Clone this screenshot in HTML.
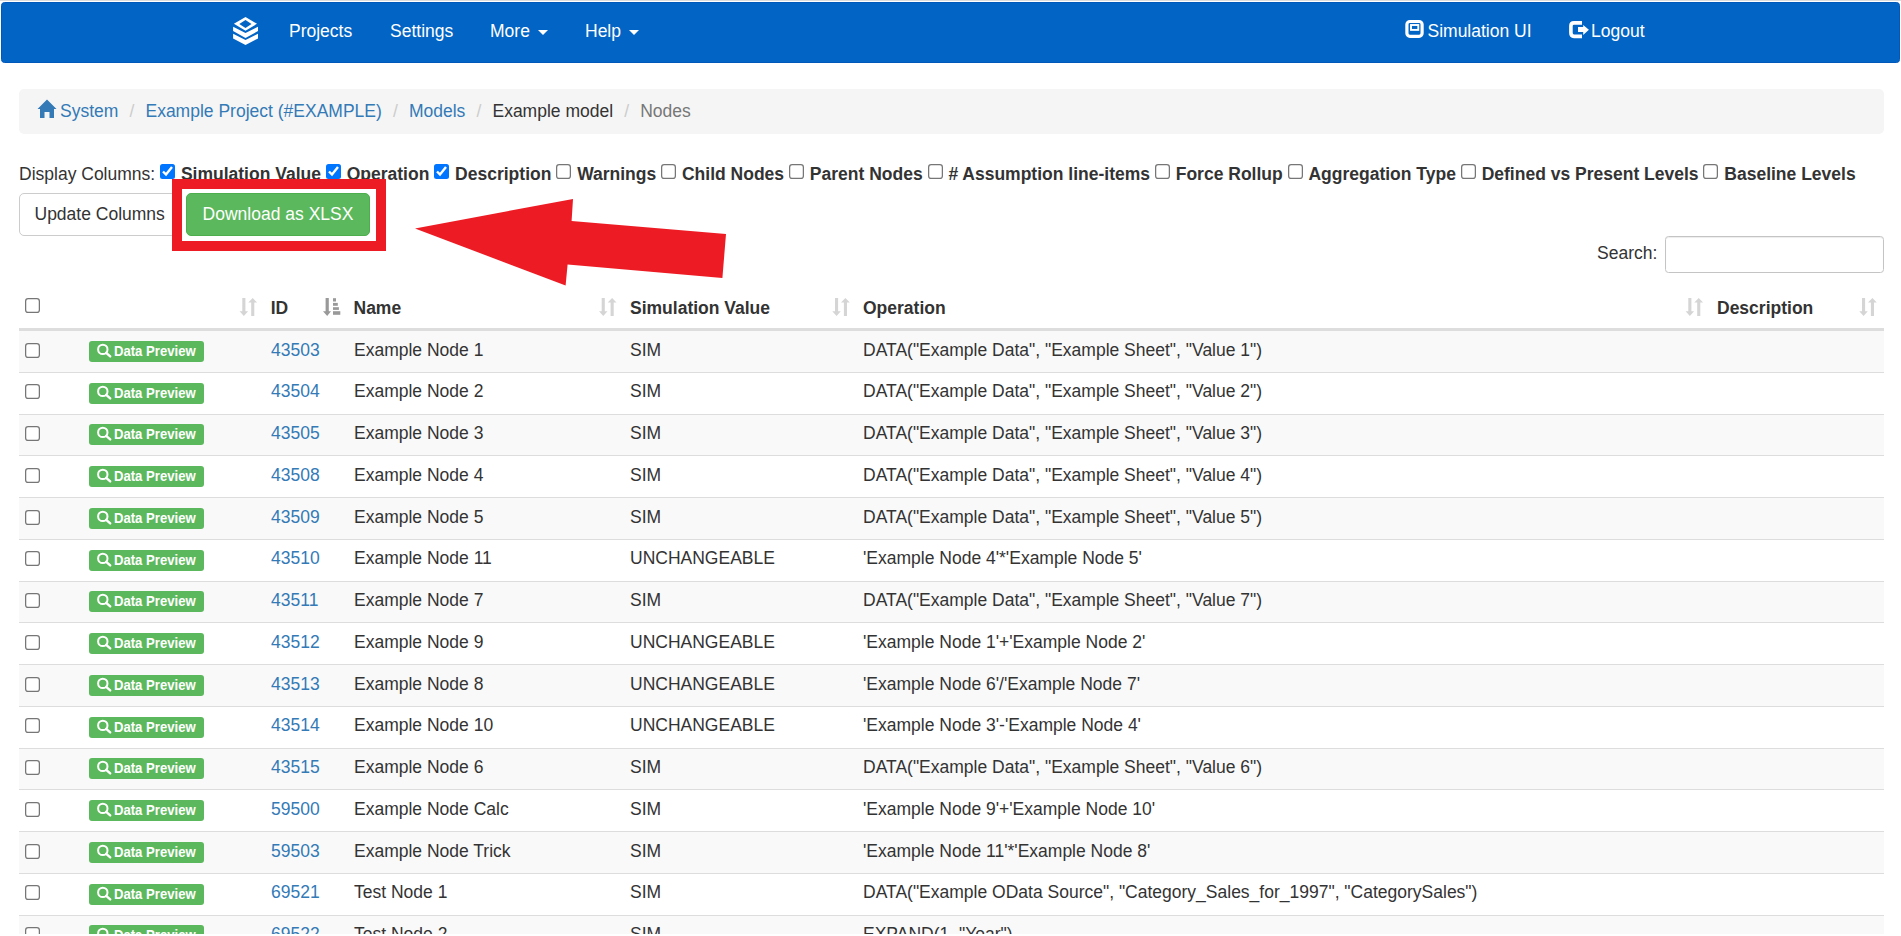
<!DOCTYPE html><html><head><meta charset="utf-8"><title>Nodes</title><style>
*{box-sizing:border-box}
html,body{margin:0;padding:0;background:#fff;overflow:hidden}
body{width:1901px;height:936px;position:relative;font-family:"Liberation Sans",sans-serif;font-size:17.5px;line-height:25px;color:#333}
.abs{position:absolute;white-space:nowrap}
#topline{position:absolute;left:0;top:0;width:1901px;height:1px;background:#dcdcdc}
#nav{position:absolute;left:1px;top:2px;width:1899px;height:61px;background:#0264c4;border:1px solid #0058bb;border-radius:3.5px}
.nl{position:absolute;color:#fff;font-size:17.5px;line-height:25px;white-space:nowrap}
.caret{display:inline-block;width:0;height:0;margin-left:8px;vertical-align:middle;border-top:5px solid #fff;border-left:5px solid transparent;border-right:5px solid transparent}
#bc{position:absolute;left:19px;top:89px;width:1865px;height:45px;background:#f5f5f5;border-radius:5px}
a{color:#337ab7;text-decoration:none}
.sep{color:#ccc;padding:0 6.25px}
input[type=checkbox]{zoom:1.25;margin:0;vertical-align:baseline;width:12px;height:12px}
.cbw input{display:block}
.dcl input{margin-right:0.8px;position:relative;top:-0.8px}
.btn{position:absolute;height:43px;border-radius:5px;font-size:17.5px;line-height:25px;text-align:center;padding:8px 0}
#upd{left:19px;top:193px;width:161px;text-align:left;padding-left:14.5px;background:#fff;border:1px solid #ccc;color:#333}
#dl{left:186px;top:193px;width:184px;background:#5cb85c;border:1px solid #4cae4c;color:#fff}
#search{position:absolute;left:1665px;top:236px;width:219px;height:37px;border:1px solid #c4c4c4;border-radius:3.5px;background:#fff;box-shadow:inset 0 1px 1px rgba(0,0,0,.075)}
th,td{padding:0}
.hdr{position:absolute;font-weight:bold;white-space:nowrap}
.row{position:absolute;left:19px;width:1865px;border-bottom:1px solid #ddd}
.row.odd{background:#f9f9f9}
.lbl{position:absolute;left:89px;width:115px;height:21px;background:#5cb85c;color:#fff;border-radius:3px;font-weight:bold;font-size:13.1px;line-height:21px;white-space:nowrap}
.cell{position:absolute;white-space:nowrap}
</style></head><body>
<div id="topline"></div>
<div id="nav"></div>
<svg class="abs" style="left:228px;top:12px" width="36" height="38" viewBox="228 12 36 38">
<path d="M245.5 16.9 L257 23.8 L245.5 30.7 L233.9 23.8 Z M245.5 20.1 L251.5 24 L245.5 27.9 L239.3 24 Z" fill="#fff" fill-rule="evenodd"/>
<path d="M233.1 26.8 L245.5 33.1 L258 26.8 L258 31.1 L245.5 38 L233.1 31.1 Z" fill="#fff"/>
<path d="M233.1 33.7 L245.5 40 L258 33.7 L258 38.4 L245.5 44.9 L233.1 38.4 Z" fill="#fff"/>
</svg>
<div class="nl" style="left:289px;top:19px">Projects</div>
<div class="nl" style="left:390px;top:19px">Settings</div>
<div class="nl" style="left:490px;top:19px">More<span class="caret"></span></div>
<div class="nl" style="left:585px;top:19px">Help<span class="caret"></span></div>
<svg class="abs" style="left:1400px;top:14px" width="30" height="30" viewBox="1400 14 30 30"><rect x="1406.9" y="21.5" width="15.2" height="14.8" rx="3" fill="none" stroke="#fff" stroke-width="3.2"/><rect x="1411" y="25" width="7.3" height="4.9" fill="none" stroke="#fff" stroke-width="1.9"/></svg>
<div class="nl" style="left:1427.5px;top:19px">Simulation UI</div>
<svg class="abs" style="left:1560px;top:14px" width="32" height="30" viewBox="1560 14 32 30"><path d="M1582 22.9 H1574 Q1570.9 22.9 1570.9 26 V32.8 Q1570.9 36.4 1574 36.4 H1582" fill="none" stroke="#fff" stroke-width="3.6"/><path d="M1578 27 H1583.2 V24.9 L1588.9 29.8 L1583.2 35 V31.9 H1578 Z" fill="#fff"/></svg>
<div class="nl" style="left:1591px;top:19px">Logout</div>
<div id="bc"></div>
<svg class="abs" style="left:37px;top:99px" width="20" height="19" viewBox="0 0 20 19"><path d="M10 0.5 L19.5 10 H17 V19 H12.5 V13 H7.5 V19 H3 V10 H0.5 Z" fill="#337ab7"/></svg>
<div class="abs" style="left:60px;top:99px"><a>System</a> <span class="sep">/&nbsp;</span><a>Example Project (#EXAMPLE)</a> <span class="sep">/&nbsp;</span><a>Models</a> <span class="sep">/&nbsp;</span>Example model <span class="sep">/&nbsp;</span><span style="color:#777">Nodes</span></div>
<div class="abs dcl" style="left:19px;top:162px">Display Columns: <input type="checkbox" checked> <b>Simulation Value</b> <input type="checkbox" checked> <b>Operation</b> <input type="checkbox" checked> <b>Description</b> <input type="checkbox"> <b>Warnings</b> <input type="checkbox"> <b>Child Nodes</b> <input type="checkbox"> <b>Parent Nodes</b> <input type="checkbox"> <b># Assumption line-items</b> <input type="checkbox"> <b>Force Rollup</b> <input type="checkbox"> <b>Aggregation Type</b> <input type="checkbox"> <b>Defined vs Present Levels</b> <input type="checkbox"> <b>Baseline Levels</b></div>
<div class="btn" id="upd">Update Columns</div>
<div class="btn" id="dl">Download as XLSX</div>
<div class="abs" style="left:1597px;top:241px">Search:</div>
<div id="search"></div>
<div class="abs" style="left:19px;top:328px;width:1865px;height:3px;background:#ddd"></div>
<div class="abs cbw" style="left:25px;top:298px"><input type="checkbox"></div>
<svg class="abs" style="left:237px;top:292px" width="24" height="30" viewBox="237 292 24 30"><path d="M242.29999999999998 298.1 H245.4 V311.2 H248.1 L243.85 315.9 L239.6 311.2 H242.29999999999998 Z" fill="#d5d5d5"/><path d="M251.2 315.9 H254.29999999999998 V302.6 H257.1 L252.7 298.1 L248.29999999999998 302.6 H251.2 Z" fill="#d5d5d5"/></svg>
<svg class="abs" style="left:597px;top:292px" width="24" height="30" viewBox="597 292 24 30"><path d="M601.7 298.1 H604.8 V311.2 H607.5 L603.25 315.9 L599 311.2 H601.7 Z" fill="#d5d5d5"/><path d="M610.6 315.9 H613.7 V302.6 H616.5 L612.1 298.1 L607.7 302.6 H610.6 Z" fill="#d5d5d5"/></svg>
<svg class="abs" style="left:830px;top:292px" width="24" height="30" viewBox="830 292 24 30"><path d="M835.0 298.1 H838.0999999999999 V311.2 H840.8 L836.55 315.9 L832.3 311.2 H835.0 Z" fill="#d5d5d5"/><path d="M843.9 315.9 H847.0 V302.6 H849.8 L845.4 298.1 L841.0 302.6 H843.9 Z" fill="#d5d5d5"/></svg>
<svg class="abs" style="left:1683px;top:292px" width="24" height="30" viewBox="1683 292 24 30"><path d="M1688.3 298.1 H1691.3999999999999 V311.2 H1694.1 L1689.85 315.9 L1685.6 311.2 H1688.3 Z" fill="#d5d5d5"/><path d="M1697.1999999999998 315.9 H1700.3 V302.6 H1703.1 L1698.6999999999998 298.1 L1694.3 302.6 H1697.1999999999998 Z" fill="#d5d5d5"/></svg>
<svg class="abs" style="left:1857px;top:292px" width="24" height="30" viewBox="1857 292 24 30"><path d="M1862.0 298.1 H1865.1 V311.2 H1867.8 L1863.55 315.9 L1859.3 311.2 H1862.0 Z" fill="#d5d5d5"/><path d="M1870.8999999999999 315.9 H1874.0 V302.6 H1876.8 L1872.3999999999999 298.1 L1868.0 302.6 H1870.8999999999999 Z" fill="#d5d5d5"/></svg>
<svg class="abs" style="left:315px;top:292px" width="34" height="30" viewBox="315 292 34 30"><path d="M325.6 298.1 H328.8 V311.2 H331 L327.2 315.9 L323 311.2 H325.6 Z" fill="#999"/><rect x="333" y="298.2" width="3" height="3.3" fill="#999"/><rect x="333" y="302.9" width="4.8" height="2.9" fill="#999"/><rect x="333" y="307.2" width="5.9" height="2.7" fill="#999"/><rect x="333" y="311.2" width="7.3" height="3.6" fill="#999"/></svg>
<div class="hdr" style="left:270.7px;top:296px">ID</div>
<div class="hdr" style="left:353.5px;top:296px">Name</div>
<div class="hdr" style="left:630.0px;top:296px">Simulation Value</div>
<div class="hdr" style="left:863.0px;top:296px">Operation</div>
<div class="hdr" style="left:1717.0px;top:296px">Description</div>
<div class="row odd" style="top:331.00px;height:41.75px"></div>
<div class="abs cbw" style="left:25px;top:343px"><input type="checkbox"></div>
<div class="lbl" style="top:340.90px"><svg style="position:absolute;left:0;top:0" width="30" height="21" viewBox="0 0 30 21"><circle cx="13.8" cy="8.4" r="4.7" fill="none" stroke="#fff" stroke-width="2"/><path d="M17.2 11.8 L21.2 15.4" stroke="#fff" stroke-width="2.4" stroke-linecap="round"/></svg><span style="position:absolute;left:25px;font-size:13.125px;transform:scaleY(1.07);transform-origin:0 15px">Data Preview</span></div>
<div class="cell" style="left:271px;top:337.60px"><a>43503</a></div>
<div class="cell" style="left:354px;top:337.60px">Example Node 1</div>
<div class="cell" style="left:630px;top:337.60px">SIM</div>
<div class="cell" style="left:863px;top:337.60px">DATA(&quot;Example Data&quot;, &quot;Example Sheet&quot;, &quot;Value 1&quot;)</div>
<div class="row" style="top:372.75px;height:41.75px"></div>
<div class="abs cbw" style="left:25px;top:384px"><input type="checkbox"></div>
<div class="lbl" style="top:382.65px"><svg style="position:absolute;left:0;top:0" width="30" height="21" viewBox="0 0 30 21"><circle cx="13.8" cy="8.4" r="4.7" fill="none" stroke="#fff" stroke-width="2"/><path d="M17.2 11.8 L21.2 15.4" stroke="#fff" stroke-width="2.4" stroke-linecap="round"/></svg><span style="position:absolute;left:25px;font-size:13.125px;transform:scaleY(1.07);transform-origin:0 15px">Data Preview</span></div>
<div class="cell" style="left:271px;top:379.35px"><a>43504</a></div>
<div class="cell" style="left:354px;top:379.35px">Example Node 2</div>
<div class="cell" style="left:630px;top:379.35px">SIM</div>
<div class="cell" style="left:863px;top:379.35px">DATA(&quot;Example Data&quot;, &quot;Example Sheet&quot;, &quot;Value 2&quot;)</div>
<div class="row odd" style="top:414.50px;height:41.75px"></div>
<div class="abs cbw" style="left:25px;top:426px"><input type="checkbox"></div>
<div class="lbl" style="top:424.40px"><svg style="position:absolute;left:0;top:0" width="30" height="21" viewBox="0 0 30 21"><circle cx="13.8" cy="8.4" r="4.7" fill="none" stroke="#fff" stroke-width="2"/><path d="M17.2 11.8 L21.2 15.4" stroke="#fff" stroke-width="2.4" stroke-linecap="round"/></svg><span style="position:absolute;left:25px;font-size:13.125px;transform:scaleY(1.07);transform-origin:0 15px">Data Preview</span></div>
<div class="cell" style="left:271px;top:421.10px"><a>43505</a></div>
<div class="cell" style="left:354px;top:421.10px">Example Node 3</div>
<div class="cell" style="left:630px;top:421.10px">SIM</div>
<div class="cell" style="left:863px;top:421.10px">DATA(&quot;Example Data&quot;, &quot;Example Sheet&quot;, &quot;Value 3&quot;)</div>
<div class="row" style="top:456.25px;height:41.75px"></div>
<div class="abs cbw" style="left:25px;top:468px"><input type="checkbox"></div>
<div class="lbl" style="top:466.15px"><svg style="position:absolute;left:0;top:0" width="30" height="21" viewBox="0 0 30 21"><circle cx="13.8" cy="8.4" r="4.7" fill="none" stroke="#fff" stroke-width="2"/><path d="M17.2 11.8 L21.2 15.4" stroke="#fff" stroke-width="2.4" stroke-linecap="round"/></svg><span style="position:absolute;left:25px;font-size:13.125px;transform:scaleY(1.07);transform-origin:0 15px">Data Preview</span></div>
<div class="cell" style="left:271px;top:462.85px"><a>43508</a></div>
<div class="cell" style="left:354px;top:462.85px">Example Node 4</div>
<div class="cell" style="left:630px;top:462.85px">SIM</div>
<div class="cell" style="left:863px;top:462.85px">DATA(&quot;Example Data&quot;, &quot;Example Sheet&quot;, &quot;Value 4&quot;)</div>
<div class="row odd" style="top:498.00px;height:41.75px"></div>
<div class="abs cbw" style="left:25px;top:510px"><input type="checkbox"></div>
<div class="lbl" style="top:507.90px"><svg style="position:absolute;left:0;top:0" width="30" height="21" viewBox="0 0 30 21"><circle cx="13.8" cy="8.4" r="4.7" fill="none" stroke="#fff" stroke-width="2"/><path d="M17.2 11.8 L21.2 15.4" stroke="#fff" stroke-width="2.4" stroke-linecap="round"/></svg><span style="position:absolute;left:25px;font-size:13.125px;transform:scaleY(1.07);transform-origin:0 15px">Data Preview</span></div>
<div class="cell" style="left:271px;top:504.60px"><a>43509</a></div>
<div class="cell" style="left:354px;top:504.60px">Example Node 5</div>
<div class="cell" style="left:630px;top:504.60px">SIM</div>
<div class="cell" style="left:863px;top:504.60px">DATA(&quot;Example Data&quot;, &quot;Example Sheet&quot;, &quot;Value 5&quot;)</div>
<div class="row" style="top:539.75px;height:41.75px"></div>
<div class="abs cbw" style="left:25px;top:551px"><input type="checkbox"></div>
<div class="lbl" style="top:549.65px"><svg style="position:absolute;left:0;top:0" width="30" height="21" viewBox="0 0 30 21"><circle cx="13.8" cy="8.4" r="4.7" fill="none" stroke="#fff" stroke-width="2"/><path d="M17.2 11.8 L21.2 15.4" stroke="#fff" stroke-width="2.4" stroke-linecap="round"/></svg><span style="position:absolute;left:25px;font-size:13.125px;transform:scaleY(1.07);transform-origin:0 15px">Data Preview</span></div>
<div class="cell" style="left:271px;top:546.35px"><a>43510</a></div>
<div class="cell" style="left:354px;top:546.35px">Example Node 11</div>
<div class="cell" style="left:630px;top:546.35px">UNCHANGEABLE</div>
<div class="cell" style="left:863px;top:546.35px">&#x27;Example Node 4&#x27;*&#x27;Example Node 5&#x27;</div>
<div class="row odd" style="top:581.50px;height:41.75px"></div>
<div class="abs cbw" style="left:25px;top:593px"><input type="checkbox"></div>
<div class="lbl" style="top:591.40px"><svg style="position:absolute;left:0;top:0" width="30" height="21" viewBox="0 0 30 21"><circle cx="13.8" cy="8.4" r="4.7" fill="none" stroke="#fff" stroke-width="2"/><path d="M17.2 11.8 L21.2 15.4" stroke="#fff" stroke-width="2.4" stroke-linecap="round"/></svg><span style="position:absolute;left:25px;font-size:13.125px;transform:scaleY(1.07);transform-origin:0 15px">Data Preview</span></div>
<div class="cell" style="left:271px;top:588.10px"><a>43511</a></div>
<div class="cell" style="left:354px;top:588.10px">Example Node 7</div>
<div class="cell" style="left:630px;top:588.10px">SIM</div>
<div class="cell" style="left:863px;top:588.10px">DATA(&quot;Example Data&quot;, &quot;Example Sheet&quot;, &quot;Value 7&quot;)</div>
<div class="row" style="top:623.25px;height:41.75px"></div>
<div class="abs cbw" style="left:25px;top:635px"><input type="checkbox"></div>
<div class="lbl" style="top:633.15px"><svg style="position:absolute;left:0;top:0" width="30" height="21" viewBox="0 0 30 21"><circle cx="13.8" cy="8.4" r="4.7" fill="none" stroke="#fff" stroke-width="2"/><path d="M17.2 11.8 L21.2 15.4" stroke="#fff" stroke-width="2.4" stroke-linecap="round"/></svg><span style="position:absolute;left:25px;font-size:13.125px;transform:scaleY(1.07);transform-origin:0 15px">Data Preview</span></div>
<div class="cell" style="left:271px;top:629.85px"><a>43512</a></div>
<div class="cell" style="left:354px;top:629.85px">Example Node 9</div>
<div class="cell" style="left:630px;top:629.85px">UNCHANGEABLE</div>
<div class="cell" style="left:863px;top:629.85px">&#x27;Example Node 1&#x27;+&#x27;Example Node 2&#x27;</div>
<div class="row odd" style="top:665.00px;height:41.75px"></div>
<div class="abs cbw" style="left:25px;top:677px"><input type="checkbox"></div>
<div class="lbl" style="top:674.90px"><svg style="position:absolute;left:0;top:0" width="30" height="21" viewBox="0 0 30 21"><circle cx="13.8" cy="8.4" r="4.7" fill="none" stroke="#fff" stroke-width="2"/><path d="M17.2 11.8 L21.2 15.4" stroke="#fff" stroke-width="2.4" stroke-linecap="round"/></svg><span style="position:absolute;left:25px;font-size:13.125px;transform:scaleY(1.07);transform-origin:0 15px">Data Preview</span></div>
<div class="cell" style="left:271px;top:671.60px"><a>43513</a></div>
<div class="cell" style="left:354px;top:671.60px">Example Node 8</div>
<div class="cell" style="left:630px;top:671.60px">UNCHANGEABLE</div>
<div class="cell" style="left:863px;top:671.60px">&#x27;Example Node 6&#x27;/&#x27;Example Node 7&#x27;</div>
<div class="row" style="top:706.75px;height:41.75px"></div>
<div class="abs cbw" style="left:25px;top:718px"><input type="checkbox"></div>
<div class="lbl" style="top:716.65px"><svg style="position:absolute;left:0;top:0" width="30" height="21" viewBox="0 0 30 21"><circle cx="13.8" cy="8.4" r="4.7" fill="none" stroke="#fff" stroke-width="2"/><path d="M17.2 11.8 L21.2 15.4" stroke="#fff" stroke-width="2.4" stroke-linecap="round"/></svg><span style="position:absolute;left:25px;font-size:13.125px;transform:scaleY(1.07);transform-origin:0 15px">Data Preview</span></div>
<div class="cell" style="left:271px;top:713.35px"><a>43514</a></div>
<div class="cell" style="left:354px;top:713.35px">Example Node 10</div>
<div class="cell" style="left:630px;top:713.35px">UNCHANGEABLE</div>
<div class="cell" style="left:863px;top:713.35px">&#x27;Example Node 3&#x27;-&#x27;Example Node 4&#x27;</div>
<div class="row odd" style="top:748.50px;height:41.75px"></div>
<div class="abs cbw" style="left:25px;top:760px"><input type="checkbox"></div>
<div class="lbl" style="top:758.40px"><svg style="position:absolute;left:0;top:0" width="30" height="21" viewBox="0 0 30 21"><circle cx="13.8" cy="8.4" r="4.7" fill="none" stroke="#fff" stroke-width="2"/><path d="M17.2 11.8 L21.2 15.4" stroke="#fff" stroke-width="2.4" stroke-linecap="round"/></svg><span style="position:absolute;left:25px;font-size:13.125px;transform:scaleY(1.07);transform-origin:0 15px">Data Preview</span></div>
<div class="cell" style="left:271px;top:755.10px"><a>43515</a></div>
<div class="cell" style="left:354px;top:755.10px">Example Node 6</div>
<div class="cell" style="left:630px;top:755.10px">SIM</div>
<div class="cell" style="left:863px;top:755.10px">DATA(&quot;Example Data&quot;, &quot;Example Sheet&quot;, &quot;Value 6&quot;)</div>
<div class="row" style="top:790.25px;height:41.75px"></div>
<div class="abs cbw" style="left:25px;top:802px"><input type="checkbox"></div>
<div class="lbl" style="top:800.15px"><svg style="position:absolute;left:0;top:0" width="30" height="21" viewBox="0 0 30 21"><circle cx="13.8" cy="8.4" r="4.7" fill="none" stroke="#fff" stroke-width="2"/><path d="M17.2 11.8 L21.2 15.4" stroke="#fff" stroke-width="2.4" stroke-linecap="round"/></svg><span style="position:absolute;left:25px;font-size:13.125px;transform:scaleY(1.07);transform-origin:0 15px">Data Preview</span></div>
<div class="cell" style="left:271px;top:796.85px"><a>59500</a></div>
<div class="cell" style="left:354px;top:796.85px">Example Node Calc</div>
<div class="cell" style="left:630px;top:796.85px">SIM</div>
<div class="cell" style="left:863px;top:796.85px">&#x27;Example Node 9&#x27;+&#x27;Example Node 10&#x27;</div>
<div class="row odd" style="top:832.00px;height:41.75px"></div>
<div class="abs cbw" style="left:25px;top:844px"><input type="checkbox"></div>
<div class="lbl" style="top:841.90px"><svg style="position:absolute;left:0;top:0" width="30" height="21" viewBox="0 0 30 21"><circle cx="13.8" cy="8.4" r="4.7" fill="none" stroke="#fff" stroke-width="2"/><path d="M17.2 11.8 L21.2 15.4" stroke="#fff" stroke-width="2.4" stroke-linecap="round"/></svg><span style="position:absolute;left:25px;font-size:13.125px;transform:scaleY(1.07);transform-origin:0 15px">Data Preview</span></div>
<div class="cell" style="left:271px;top:838.60px"><a>59503</a></div>
<div class="cell" style="left:354px;top:838.60px">Example Node Trick</div>
<div class="cell" style="left:630px;top:838.60px">SIM</div>
<div class="cell" style="left:863px;top:838.60px">&#x27;Example Node 11&#x27;*&#x27;Example Node 8&#x27;</div>
<div class="row" style="top:873.75px;height:41.75px"></div>
<div class="abs cbw" style="left:25px;top:885px"><input type="checkbox"></div>
<div class="lbl" style="top:883.65px"><svg style="position:absolute;left:0;top:0" width="30" height="21" viewBox="0 0 30 21"><circle cx="13.8" cy="8.4" r="4.7" fill="none" stroke="#fff" stroke-width="2"/><path d="M17.2 11.8 L21.2 15.4" stroke="#fff" stroke-width="2.4" stroke-linecap="round"/></svg><span style="position:absolute;left:25px;font-size:13.125px;transform:scaleY(1.07);transform-origin:0 15px">Data Preview</span></div>
<div class="cell" style="left:271px;top:880.35px"><a>69521</a></div>
<div class="cell" style="left:354px;top:880.35px">Test Node 1</div>
<div class="cell" style="left:630px;top:880.35px">SIM</div>
<div class="cell" style="left:863px;top:880.35px">DATA(&quot;Example OData Source&quot;, &quot;Category_Sales_for_1997&quot;, &quot;CategorySales&quot;)</div>
<div class="row odd" style="top:915.50px;height:41.75px"></div>
<div class="abs cbw" style="left:25px;top:927px"><input type="checkbox"></div>
<div class="lbl" style="top:925.40px"><svg style="position:absolute;left:0;top:0" width="30" height="21" viewBox="0 0 30 21"><circle cx="13.8" cy="8.4" r="4.7" fill="none" stroke="#fff" stroke-width="2"/><path d="M17.2 11.8 L21.2 15.4" stroke="#fff" stroke-width="2.4" stroke-linecap="round"/></svg><span style="position:absolute;left:25px;font-size:13.125px;transform:scaleY(1.07);transform-origin:0 15px">Data Preview</span></div>
<div class="cell" style="left:271px;top:922.10px"><a>69522</a></div>
<div class="cell" style="left:354px;top:922.10px">Test Node 2</div>
<div class="cell" style="left:630px;top:922.10px">SIM</div>
<div class="cell" style="left:863px;top:922.10px">EXPAND(1, &quot;Year&quot;)</div>
<div class="abs" style="left:0;top:934px;width:1901px;height:2px;background:#fff"></div>
<svg class="abs" style="left:0;top:0" width="1901" height="936" viewBox="0 0 1901 936"><rect x="177" y="184" width="204" height="62" fill="none" stroke="#ed1c24" stroke-width="10"/><path d="M415 228.4 L573 199 L571.6 221 L726 234 L722.4 278 L567.6 264.4 L565.6 285.6 Z" fill="#ed1c24"/></svg>
</body></html>
